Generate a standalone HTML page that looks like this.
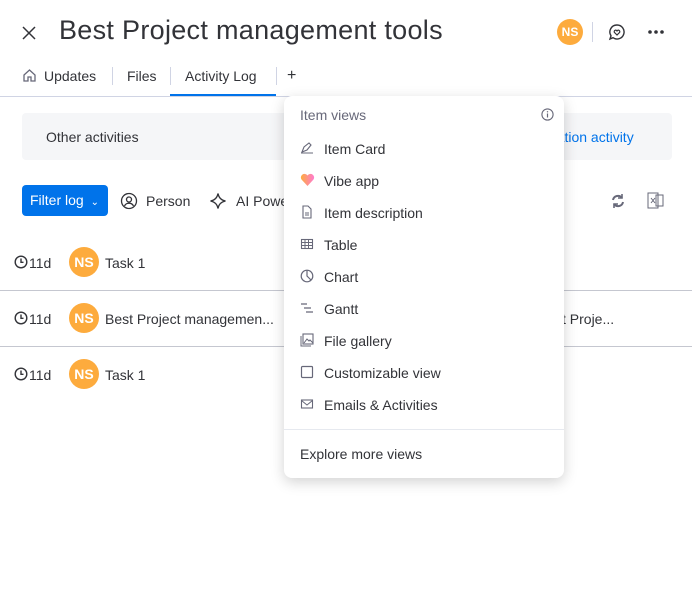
<!DOCTYPE html>
<html><head><meta charset="utf-8"><style>
*{box-sizing:border-box;margin:0;padding:0}
body{width:692px;height:593px;background:#fff;font-family:"Liberation Sans",sans-serif;color:#323338;position:relative;overflow:hidden;font-size:14px}
.a{position:absolute;white-space:nowrap}
.av{position:absolute;width:30px;height:30px;border-radius:50%;background:#fdab3d;color:#fff;font-weight:bold;font-size:14px;text-align:center;line-height:30px}
.hl{position:absolute;left:0;width:692px;height:1px;background:#c5c7d0}
.menu{position:absolute;left:284px;top:96px;width:280px;height:382px;background:#fff;border-radius:8px;box-shadow:0 4px 14px rgba(0,0,0,.18)}
.mi{position:absolute;left:40px;font-size:14px;color:#323338}
.ic{position:absolute;left:16px}
</style></head><body>
<svg class="a" style="left:21px;top:25px" width="16" height="16" viewBox="0 0 16 16"><path d="M2 2L14 14M14 2L2 14" stroke="#323338" stroke-width="1.5"/></svg>
<div class="a" style="left:59px;top:15px;font-size:27px;letter-spacing:0.3px;color:#323338">Best Project management tools</div>
<div class="av" style="left:557px;top:19px;width:26px;height:26px;line-height:26px;font-size:12px">NS</div>
<div class="a" style="left:592px;top:22px;width:1px;height:20px;background:#d0d4e4"></div>
<svg class="a" style="left:608px;top:23px" width="18" height="18" viewBox="0 0 18 18"><path d="M9 2a7 7 0 1 1-4 12.7L2 16l1-3.2A7 7 0 0 1 9 2z" fill="none" stroke="#323338" stroke-width="1.4"/><path d="M9 12l-2.6-2.6a1.3 1.3 0 0 1 2.6-1.5 1.3 1.3 0 0 1 2.6 1.5z" fill="none" stroke="#323338" stroke-width="1.2"/></svg>
<svg class="a" style="left:647px;top:29px" width="18" height="6" viewBox="0 0 18 6"><circle cx="3" cy="3" r="1.8" fill="#323338"/><circle cx="9" cy="3" r="1.8" fill="#323338"/><circle cx="15" cy="3" r="1.8" fill="#323338"/></svg>
<svg class="a" style="left:22px;top:68px" width="15" height="15" viewBox="0 0 15 15"><path d="M2 7L7.5 2 13 7V13H9V9H6V13H2Z" fill="none" stroke="#676879" stroke-width="1.3"/></svg>
<div class="a" style="left:44px;top:68px">Updates</div>
<div class="a" style="left:112px;top:67px;width:1px;height:18px;background:#d0d4e4"></div>
<div class="a" style="left:127px;top:68px">Files</div>
<div class="a" style="left:170px;top:67px;width:1px;height:18px;background:#d0d4e4"></div>
<div class="a" style="left:185px;top:68px">Activity Log</div>
<div class="a" style="left:276px;top:67px;width:1px;height:18px;background:#d0d4e4"></div>
<div class="a" style="left:287px;top:67px;font-size:16px">+</div>
<div class="hl" style="top:96px;background:#d0d4e4"></div>
<div class="a" style="left:170px;top:94px;width:106px;height:2px;background:#0073ea"></div>
<div class="a" style="left:22px;top:113px;width:650px;height:47px;background:#f5f6f8;border-radius:4px"></div>
<div class="a" style="left:46px;top:129px">Other activities</div>
<div class="a" style="left:545px;top:129px;color:#0073ea">mation activity</div>
<div class="a" style="left:22px;top:185px;width:86px;height:31px;background:#0073ea;border-radius:4px;color:#fff;padding:7px 0 0 8px">Filter log <span style="font-size:10px;margin-left:3px">&#8964;</span></div>
<svg class="a" style="left:120px;top:192px" width="18" height="18" viewBox="0 0 18 18"><circle cx="9" cy="9" r="7.5" fill="none" stroke="#323338" stroke-width="1.3"/><circle cx="9" cy="7.5" r="2.5" fill="none" stroke="#323338" stroke-width="1.3"/><path d="M4.5 14a5 5 0 0 1 9 0" fill="none" stroke="#323338" stroke-width="1.3"/></svg>
<div class="a" style="left:146px;top:193px">Person</div>
<svg class="a" style="left:209px;top:192px" width="18" height="18" viewBox="0 0 18 18"><path d="M9 1.5C9.8 6 12 8.2 16.5 9 12 9.8 9.8 12 9 16.5 8.2 12 6 9.8 1.5 9 6 8.2 8.2 6 9 1.5z" fill="none" stroke="#323338" stroke-width="1.3"/></svg>
<div class="a" style="left:236px;top:193px">AI Powe</div>
<svg class="a" style="left:610px;top:193px" width="16" height="16" viewBox="0 0 16 16"><path d="M3 7a5 5 0 0 1 9-2M13 9a5 5 0 0 1-9 2" fill="none" stroke="#676879" stroke-width="2"/><path d="M12 1v4H8M4 15v-4h4" fill="none" stroke="#676879" stroke-width="1.6"/></svg>
<svg class="a" style="left:647px;top:192px" width="17" height="17" viewBox="0 0 17 17"><rect x="1" y="1" width="10" height="15" fill="none" stroke="#676879"/><rect x="9" y="3" width="7" height="11" fill="none" stroke="#676879"/><path d="M4 6l4 5M8 6l-4 5" stroke="#676879"/></svg>
<div class="hl" style="top:290px"></div>
<div class="hl" style="top:346px"></div>
<svg class="a" style="left:14px;top:255px" width="14" height="14" viewBox="0 0 14 14"><circle cx="7" cy="7" r="5.8" fill="none" stroke="#323338" stroke-width="1.4"/><path d="M7 3.5V7.3H9.5" fill="none" stroke="#323338" stroke-width="1.4"/></svg>
<div class="a" style="left:29px;top:255px">11d</div>
<div class="av" style="left:69px;top:247px">NS</div><div class="a" style="left:105px;top:255px">Task 1</div>
<svg class="a" style="left:14px;top:311px" width="14" height="14" viewBox="0 0 14 14"><circle cx="7" cy="7" r="5.8" fill="none" stroke="#323338" stroke-width="1.4"/><path d="M7 3.5V7.3H9.5" fill="none" stroke="#323338" stroke-width="1.4"/></svg>
<div class="a" style="left:29px;top:311px">11d</div>
<div class="av" style="left:69px;top:303px">NS</div><div class="a" style="left:105px;top:311px">Best Project managemen...</div>
<div class="a" style="left:555px;top:311px">st Proje...</div>
<svg class="a" style="left:14px;top:367px" width="14" height="14" viewBox="0 0 14 14"><circle cx="7" cy="7" r="5.8" fill="none" stroke="#323338" stroke-width="1.4"/><path d="M7 3.5V7.3H9.5" fill="none" stroke="#323338" stroke-width="1.4"/></svg>
<div class="a" style="left:29px;top:367px">11d</div>
<div class="av" style="left:69px;top:359px">NS</div><div class="a" style="left:105px;top:367px">Task 1</div>

<div class="menu">
<div class="a" style="left:16px;top:11px;color:#676879">Item views</div>
<svg class="a" style="left:257px;top:12px" width="13" height="13" viewBox="0 0 13 13"><circle cx="6.5" cy="6.5" r="5.6" fill="none" stroke="#676879" stroke-width="1.1"/><path d="M6.5 5.5V9.5" stroke="#676879" stroke-width="1.2"/><circle cx="6.5" cy="3.8" r=".7" fill="#676879"/></svg>
<svg class="ic" style="top:45px" width="14" height="14" viewBox="0 0 14 14"><path d="M1 12h12M2 11l2-5 5-4 2 2-4 5z" fill="none" stroke="#676879" stroke-width="1.1"/></svg>
<div class="mi" style="top:45px">Item Card</div>
<svg class="ic" style="top:77px" width="15" height="14" viewBox="0 0 15 14"><defs><linearGradient id="g" x1="0" x2="1"><stop offset="0" stop-color="#fdab3d"/><stop offset="1" stop-color="#ff7bd0"/></linearGradient></defs><path d="M7.5 13L1.5 6.5A3.3 3.3 0 0 1 7.5 2.5 3.3 3.3 0 0 1 13.5 6.5z" fill="url(#g)"/></svg>
<div class="mi" style="top:77px">Vibe app</div>
<svg class="ic" style="top:109px" width="14" height="14" viewBox="0 0 14 14"><path d="M3 1h5l3 3v9H3z" fill="none" stroke="#676879" stroke-width="1.1"/><path d="M5 8h4M5 10h4" stroke="#676879"/></svg>
<div class="mi" style="top:109px">Item description</div>
<svg class="ic" style="top:141px" width="14" height="14" viewBox="0 0 14 14"><rect x="1.5" y="2.5" width="11" height="9" fill="none" stroke="#676879" stroke-width="1.1"/><path d="M1.5 5.5h11M1.5 8.5h11M5 2.5v9M8.5 2.5v9" stroke="#676879"/></svg>
<div class="mi" style="top:141px">Table</div>
<svg class="ic" style="top:173px" width="14" height="14" viewBox="0 0 14 14"><circle cx="7" cy="7" r="5.8" fill="none" stroke="#676879" stroke-width="1.2"/><path d="M7 1.2V7l4 4" fill="none" stroke="#676879" stroke-width="1.2"/></svg>
<div class="mi" style="top:173px">Chart</div>
<svg class="ic" style="top:205px" width="14" height="14" viewBox="0 0 14 14"><path d="M1 3h6M4 7h7M6 11h7" stroke="#676879" stroke-width="1.2"/></svg>
<div class="mi" style="top:205px">Gantt</div>
<svg class="ic" style="top:237px" width="14" height="14" viewBox="0 0 14 14"><rect x="3" y="1" width="10" height="10" fill="none" stroke="#676879" stroke-width="1.1"/><path d="M1 3v10h10M4 10l3-4 2 2 1-1 3 3" fill="none" stroke="#676879"/></svg>
<div class="mi" style="top:237px">File gallery</div>
<svg class="ic" style="top:269px" width="14" height="14" viewBox="0 0 14 14"><rect x="1.5" y="1.5" width="11" height="11" rx="1" fill="none" stroke="#676879" stroke-width="1.2"/></svg>
<div class="mi" style="top:269px">Customizable view</div>
<svg class="ic" style="top:301px" width="14" height="14" viewBox="0 0 14 14"><rect x="1.5" y="3" width="11" height="8" fill="none" stroke="#676879" stroke-width="1.1"/><path d="M1.5 3.5L7 8l5.5-4.5" fill="none" stroke="#676879"/></svg>
<div class="mi" style="top:301px">Emails &amp; Activities</div>
<div class="a" style="left:0;top:333px;width:280px;height:1px;background:#e6e9ef"></div>
<div class="a" style="left:16px;top:350px">Explore more views</div>
</div>
</body></html>
